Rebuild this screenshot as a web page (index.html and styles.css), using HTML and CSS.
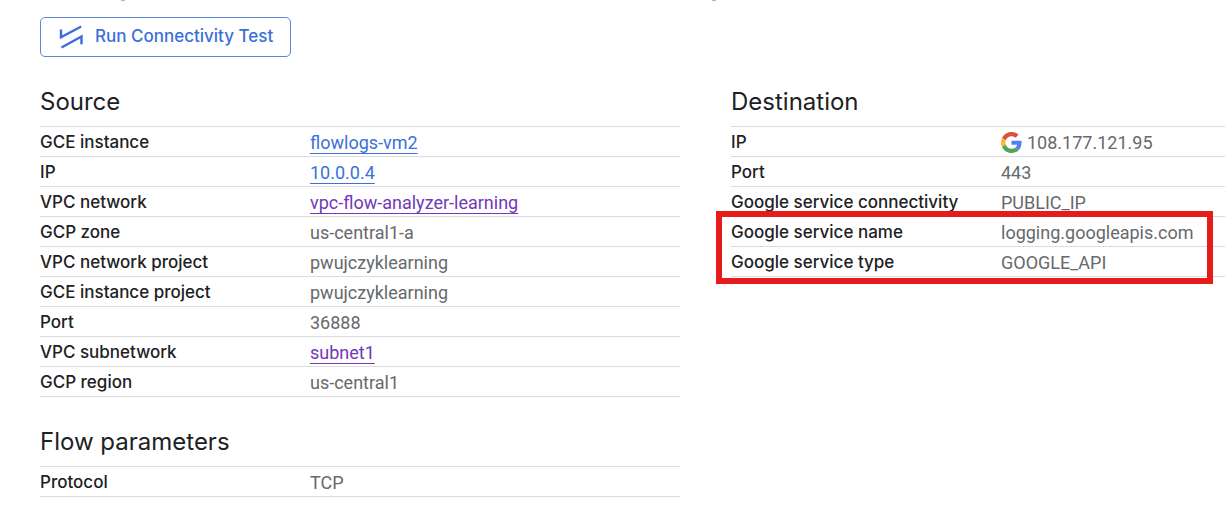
FILE: index.html
```html
<!DOCTYPE html>
<html lang="en">
<head>
<meta charset="utf-8">
<meta name="viewport" content="width=device-width, initial-scale=1">
<title>Flow details</title>
<link rel="stylesheet" href="styles.css">
</head>
<body>
<main class="page">
  <svg class="top-edge" viewBox="0 0 1225 1" aria-hidden="true"><path d="M121 0h4v1h-4zM712 0h4v1h-4z"/></svg>
  <button class="run-test" type="button">
    <svg class="run-icon" viewBox="0 0 24 24" aria-hidden="true"><path d="M2 4.500v7.700L22.200 1.500M2.500 22.500L22.500 11.500v7.700"/></svg>
    Run Connectivity Test
  </button>
  <div class="columns">
    <div class="column">
      <section class="group">
        <h2 class="title">Source</h2>
        <table class="details">
          <tr><th scope="row">GCE instance</th><td><a class="link" href="#vm">flowlogs-vm2</a></td></tr>
          <tr><th scope="row">IP</th><td><a class="link" href="#ip">10.0.0.4</a></td></tr>
          <tr><th scope="row">VPC network</th><td><a class="link seen" href="#network">vpc-flow-analyzer-learning</a></td></tr>
          <tr><th scope="row">GCP zone</th><td>us-central1-a</td></tr>
          <tr><th scope="row">VPC network project</th><td>pwujczyklearning</td></tr>
          <tr><th scope="row">GCE instance project</th><td>pwujczyklearning</td></tr>
          <tr><th scope="row">Port</th><td>36888</td></tr>
          <tr><th scope="row">VPC subnetwork</th><td><a class="link seen" href="#subnet">subnet1</a></td></tr>
          <tr><th scope="row">GCP region</th><td>us-central1</td></tr>
        </table>
      </section>
      <section class="group">
        <h2 class="title">Flow parameters</h2>
        <table class="details">
          <tr><th scope="row">Protocol</th><td>TCP</td></tr>
        </table>
      </section>
    </div>
    <section class="column group">
      <h2 class="title">Destination</h2>
      <div class="marked">
        <table class="details">
          <tr><th scope="row">IP</th><td><span class="address"><svg class="google" viewBox="0 0 48 48" aria-hidden="true"><path fill="#d9503f" d="M24 9.500c3.540 0 6.710 1.220 9.210 3.600l6.850-6.850C35.900 2.380 30.470 0 24 0 14.620 0 6.510 5.380 2.560 13.220l7.980 6.190C12.430 13.720 17.740 9.500 24 9.500z"/><path fill="#4f83ee" d="M46.980 24.550c0-1.570-.15-3.090-.38-4.550H24v9.020h12.940c-.58 2.960-2.260 5.480-4.780 7.180l7.730 6c4.510-4.180 7.090-10.360 7.090-17.650z"/><path fill="#f3bb2d" d="M10.530 28.590c-.48-1.450-.76-2.990-.76-4.590s.27-3.140.76-4.590l-7.980-6.190C.92 16.460 0 20.120 0 24s.92 7.540 2.560 10.780l7.970-6.190z"/><path fill="#55a453" d="M24 48c6.480 0 11.930-2.130 15.890-5.810l-7.730-6c-2.150 1.450-4.920 2.300-8.160 2.300-6.260 0-11.570-4.220-13.470-9.910l-7.980 6.190C6.510 42.620 14.620 48 24 48z"/></svg>108.177.121.95</span></td></tr>
          <tr><th scope="row">Port</th><td>443</td></tr>
          <tr><th scope="row">Google service connectivity</th><td>PUBLIC_IP</td></tr>
          <tr><th scope="row">Google service name</th><td>logging.googleapis.com</td></tr>
          <tr><th scope="row">Google service type</th><td>GOOGLE_API</td></tr>
        </table>
        <div class="marker"></div>
      </div>
    </section>
  </div>
</main>
</body>
</html>
```
FILE: styles.css
```css
* { box-sizing: border-box; }
body {
  margin: 0;
  background: #fff;
  color: #202124;
  font-family: Roboto, "Liberation Sans", sans-serif;
  font-size: 18px;
}
.page {
  position: relative;
  padding: 17px 0 0 40px;
}
.top-edge {
  position: absolute;
  top: 0;
  left: 0;
  width: 100%;
  fill: #b5b5b5;
}
.run-test {
  display: flex;
  align-items: center;
  gap: 12px;
  height: 40px;
  padding: 0 17px 2px 18px;
  border: 1px solid #5c86d6;
  border-radius: 5px;
  background: #fff;
  color: #3b6fdc;
  font: 500 17px Inter, Roboto, sans-serif;
  white-space: nowrap;
}
.run-icon {
  width: 24px;
  height: 24px;
  margin-top: 2px;
  fill: none;
  stroke: #3b6bdf;
  stroke-width: 2.4;
}
.columns {
  display: grid;
  grid-template-columns: 640fr 494fr;
  gap: 51px;
  padding-top: 24px;
}
.column { min-width: 0; }
.group + .group { margin-top: 24px; }
.title {
  margin: 0;
  padding-bottom: 4px;
  font: 400 24px/41px Inter, Roboto, sans-serif;
}
.details {
  width: 100%;
  border-collapse: collapse;
  border-top: 1px solid #dadce0;
  table-layout: fixed;
}
.details tr {
  height: 30px;
  border-bottom: 1px solid #dadce0;
}
.details th {
  width: 270px;
  padding: 0;
  text-align: left;
  font: 500 17px/28px Inter, Roboto, sans-serif;
  white-space: nowrap;
}
.details td {
  padding: 2px 0 0;
  color: #66696d;
  line-height: 26px;
}
.link {
  color: #3b6fdc;
  text-decoration: underline;
  text-decoration-thickness: 1px;
  text-decoration-skip-ink: none;
  text-underline-offset: 4px;
}
.seen { color: #7138b8; }
.address {
  display: flex;
  align-items: center;
  gap: 5px;
}
.google {
  width: 21px;
  height: 21px;
}
.marked { position: relative; }
.marker {
  position: absolute;
  right: 12px;
  bottom: -7px;
  left: -15px;
  height: 73px;
  border: 6px solid #e81b1b;
}
```
